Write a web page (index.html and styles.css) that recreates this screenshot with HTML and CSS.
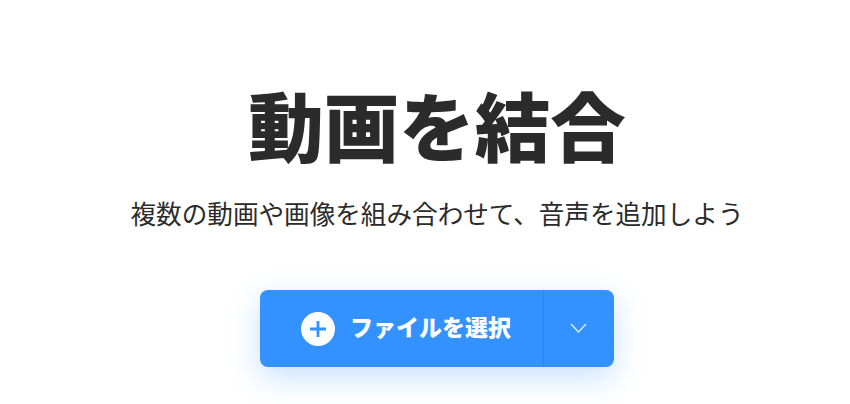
FILE: index.html
```html
<!DOCTYPE html>
<html lang="ja">
<head>
<meta charset="utf-8">
<title>動画を結合</title>
<link rel="stylesheet" href="styles.css">
</head>
<body>
<main class="hero">
<h1 class="title">動画を結合</h1>
<p class="sub">複数の動画や画像を組み合わせて、音声を追加しよう</p>
<div class="btn">
<div class="btn-main">
<svg class="plus" width="34" height="34" viewBox="0 0 34 34"><circle cx="17" cy="17" r="17" fill="#fff"/><path d="M17 9v16M9 17h16" stroke="#3392ff" stroke-width="2.8" fill="none"/></svg>
<span class="btn-label">ファイルを選択</span>
</div>
<div class="btn-drop">
<svg width="18" height="11" viewBox="0 0 18 11"><path d="M1 1 8.5 9 16 1" stroke="#fff" stroke-width="1.3" fill="none" opacity=".85"/></svg>
</div>
</div>
</main>
</body>
</html>
```
FILE: styles.css
```css
html, body { margin: 0; padding: 0; background: #fff; overflow: hidden; }
body { width: 850px; height: 404px; font-family: "Noto Sans CJK JP", "Noto Sans", sans-serif; color: #2b2b2b; }
.hero { width: 874px; display: flex; flex-direction: column; align-items: center; padding-top: 73px; }
.title { margin: 0; font-size: 75.5px; line-height: 100px; font-weight: 900; color: #2b2b2b; }
.sub { margin: 20px 0 0; font-size: 25.6px; line-height: 40px; font-weight: 400; color: #2b2b2b; }
.btn { margin-top: 57px; width: 354px; height: 77px; display: flex; background: #3392ff; border-radius: 8px; box-shadow: 0 10px 30px rgba(51,146,255,.28); }
.btn-main { flex: 1; display: flex; align-items: center; gap: 15px; padding-left: 41px; }
.btn-label { color: #fff; font-size: 23px; font-weight: 900; margin-bottom: 5px; }
.btn-drop { width: 70px; display: flex; align-items: center; justify-content: center; border-left: 1px solid #2a85ec; }
```
